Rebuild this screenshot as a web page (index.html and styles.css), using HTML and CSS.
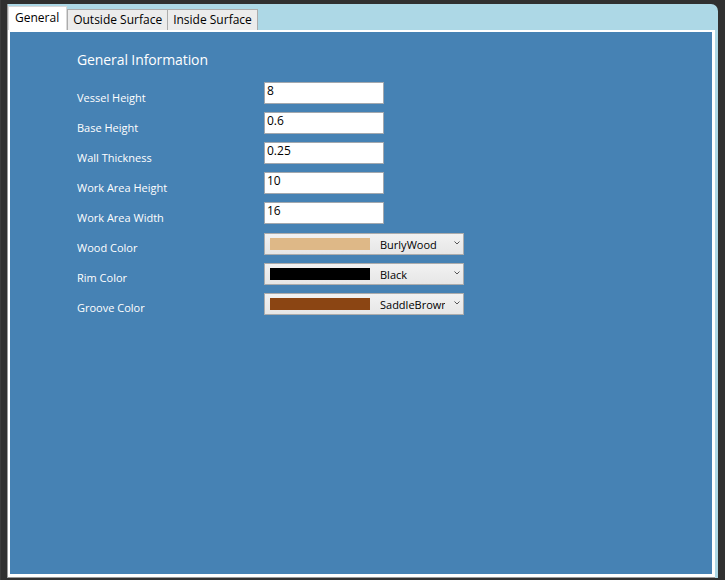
FILE: index.html
```html
<!DOCTYPE html>
<html>
<head>
<meta charset="utf-8">
<link rel="stylesheet" href="styles.css">
</head>
<body>
<div class="window">
  <div class="tabcontrol">
    <div class="tabstrip">
      <div class="tab selected">General</div>
      <div class="tab">Outside Surface</div>
      <div class="tab">Inside Surface</div>
    </div>
    <div class="panel-outer">
      <div class="panel">
        <h1 class="heading">General Information</h1>
        <div class="form">
          <div class="label">Vessel Height</div>
          <div class="field"><div class="textbox">8</div></div>
          <div class="label">Base Height</div>
          <div class="field"><div class="textbox">0.6</div></div>
          <div class="label">Wall Thickness</div>
          <div class="field"><div class="textbox">0.25</div></div>
          <div class="label">Work Area Height</div>
          <div class="field"><div class="textbox">10</div></div>
          <div class="label">Work Area Width</div>
          <div class="field"><div class="textbox">16</div></div>
          <div class="label">Wood Color</div>
          <div class="field combo-field">
            <div class="combo">
              <span class="swatch burly"></span>
              <span class="combo-text">BurlyWood</span>
              <svg class="chev" width="6" height="4" viewBox="0 0 6 4"><path d="M0.5 0.5 L3 3 L5.5 0.5" fill="none" stroke="#555" stroke-width="1"/></svg>
            </div>
          </div>
          <div class="label">Rim Color</div>
          <div class="field combo-field">
            <div class="combo">
              <span class="swatch black"></span>
              <span class="combo-text">Black</span>
              <svg class="chev" width="6" height="4" viewBox="0 0 6 4"><path d="M0.5 0.5 L3 3 L5.5 0.5" fill="none" stroke="#555" stroke-width="1"/></svg>
            </div>
          </div>
          <div class="label">Groove Color</div>
          <div class="field combo-field">
            <div class="combo">
              <span class="swatch saddle"></span>
              <span class="combo-text">SaddleBrown</span>
              <svg class="chev" width="6" height="4" viewBox="0 0 6 4"><path d="M0.5 0.5 L3 3 L5.5 0.5" fill="none" stroke="#555" stroke-width="1"/></svg>
            </div>
          </div>
        </div>
      </div>
    </div>
  </div>
</div>
</body>
</html>
```
FILE: styles.css
```css
* { box-sizing: border-box; }
html, body { margin: 0; padding: 0; }
body {
  width: 725px;
  height: 580px;
  background: #2b2b2b;
  font-family: "Open Sans", "Noto Sans", sans-serif;
  overflow: hidden;
}
.window {
  width: 725px;
  height: 580px;
  padding: 4px 8px 2px 6px;
  background: #303030;
  border-left: 1px solid #3c3c3c;
}
.tabcontrol {
  width: 711px;
  height: 574px;
  background: #add8e6;
  border-top-right-radius: 7px;
  border-left: 1px solid #9a9a9a;
  display: flex;
  flex-direction: column;
}
.tabstrip {
  height: 26px;
  display: flex;
  align-items: flex-end;
}
.tab {
  height: 21px;
  padding: 0 5px;
  font-size: 12px;
  line-height: 19px;
  color: #000;
  background: #ececec;
  border: 1px solid #acacac;
  border-bottom: none;
  margin-right: -1px;
}
.tab.selected {
  height: 24px;
  background: #fff;
  border-color: #d9d9d9;
  line-height: 22px;
  padding: 0 7px 0 6px;
  margin-right: 0;
  position: relative;
  z-index: 1;
}
.panel-outer {
  flex: 1;
  background: #fff;
  padding: 2px 3px 3px 2px;
  border-bottom: 1px solid #9a9a9a;
  margin-right: 3px;
}
.panel {
  height: 100%;
  background: #4682b4;
  padding: 19px 0 0 67px;
  color: #fff;
}
.heading {
  margin: 0 0 13px 0;
  font-size: 14px;
  font-weight: normal;
  line-height: 18px;
  letter-spacing: -0.1px;
}
.form {
  display: grid;
  grid-template-columns: 187px 200px;
  grid-auto-rows: 22px;
  row-gap: 8px;
}
.label {
  font-size: 11px;
  line-height: 14px;
  padding-top: 9px;
  white-space: nowrap;
}
.textbox {
  width: 120px;
  height: 22px;
  background: #fff;
  border: 1px solid #a3a8ae;
  color: #000;
  font-size: 12px;
  line-height: 16px;
  padding: 0 2px;
}
.combo-field { padding-top: 1px; }
.combo {
  width: 200px;
  height: 22px;
  background: linear-gradient(#f2f2f2, #e6e6e6);
  border: 1px solid #acacac;
  display: flex;
  align-items: center;
  padding-left: 5px;
  color: #000;
  font-size: 11px;
  position: relative;
}
.swatch {
  display: inline-block;
  width: 100px;
  height: 12px;
  flex: none;
}
.swatch.burly { background: #deb887; }
.swatch.black { background: #000; }
.swatch.saddle { background: #8b4513; }
.combo-text {
  margin-left: 10px;
  width: 65px;
  overflow: hidden;
  white-space: nowrap;
}
.chev {
  margin-left: 9px;
  margin-top: -2px;
}
```
